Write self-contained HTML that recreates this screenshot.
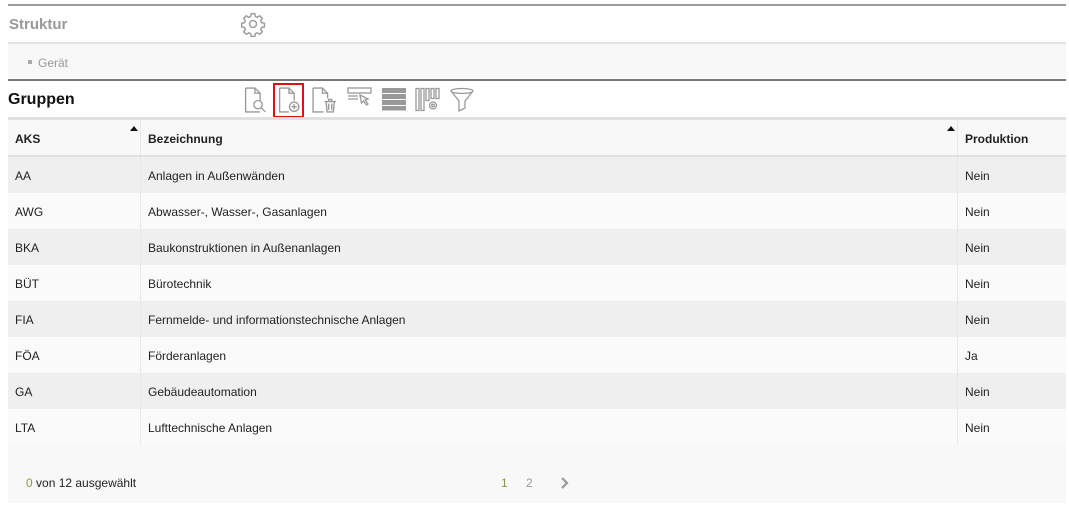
<!DOCTYPE html>
<html><head><meta charset="utf-8"><style>
body{margin:0;background:#fff;font-family:"Liberation Sans",Arial,sans-serif;width:1069px;height:509px;overflow:hidden;position:relative}
.abs{position:absolute}
.row{position:absolute;left:8px;width:1058px;height:36px;font-size:12px;color:#222}
.row div{position:absolute;top:0;height:36px;line-height:38px;box-sizing:border-box}
.c1{left:0;width:133px;padding-left:7px;border-right:1px solid #e8e8e8}
.c2{left:133px;width:817px;padding-left:7px;border-right:1px solid #e8e8e8}
.c3{left:950px;width:108px;padding-left:7px}
.g{background:#efefef}.w{background:#fafafa}
svg{position:absolute}
</style></head><body>
<div class="abs" style="left:8px;top:4px;width:1058px;height:2px;background:#9a9a9a"></div>
<div class="abs" style="left:9px;top:16px;font-size:15px;font-weight:bold;color:#999">Struktur</div>
<svg style="left:240px;top:11px" width="26" height="26" viewBox="0 0 24 24" fill="none" stroke="#999" stroke-width="1.3"><circle cx="12" cy="12" r="3.2"/><path d="M10.3 2.5h3.4l.5 2.6 1.8.8 2.2-1.5 2.4 2.4-1.5 2.2.8 1.8 2.6.5v3.4l-2.6.5-.8 1.8 1.5 2.2-2.4 2.4-2.2-1.5-1.8.8-.5 2.6h-3.4l-.5-2.6-1.8-.8-2.2 1.5-2.4-2.4 1.5-2.2-.8-1.8-2.6-.5v-3.4l2.6-.5.8-1.8-1.5-2.2 2.4-2.4 2.2 1.5 1.8-.8z"/></svg>
<div class="abs" style="left:8px;top:42px;width:1058px;height:2px;background:#e2e2e2"></div>
<div class="abs" style="left:8px;top:44px;width:1058px;height:34px;background:#f8f8f8"></div>
<div class="abs" style="left:28px;top:60px;width:4px;height:4px;background:#aaa"></div>
<div class="abs" style="left:38px;top:56px;font-size:12px;color:#999">Gerät</div>
<div class="abs" style="left:8px;top:79px;width:1058px;height:2px;background:#777"></div>
<div class="abs" style="left:8px;top:91px;font-size:16px;font-weight:bold;color:#111">Gruppen</div>
<svg style="left:243px;top:87px" width="26" height="27" viewBox="0 0 24 26" fill="none" stroke="#999" stroke-width="1.3"><path d="M2 1h9l5 5v7M16 24H2V1M11 1v5h5"/><circle cx="14" cy="17" r="4"/><path d="M17 20l4 4"/></svg>
<div class="abs" style="left:273px;top:83px;width:31px;height:35px;border:2px solid #e01010;box-sizing:border-box"></div>
<svg style="left:277px;top:87px" width="26" height="27" viewBox="0 0 24 26" fill="none" stroke="#999" stroke-width="1.3"><path d="M2 1h9l5 5v7M11 24H2V1M11 1v5h5"/><circle cx="16" cy="19" r="4.5"/><path d="M16 16.5v5M13.5 19h5"/></svg>
<svg style="left:311px;top:87px" width="27" height="27" viewBox="0 0 26 26" fill="none" stroke="#999" stroke-width="1.3"><path d="M2 1h9l5 5v5M12 24H2V1M11 1v5h5"/><path d="M13 14h11M17 14v-2h3v2M14.5 14l1 10h6l1-10M17 16v6M20 16v6"/></svg>
<svg style="left:347px;top:87px" width="26" height="22" viewBox="0 0 26 22" fill="none" stroke="#999" stroke-width="1.3"><rect x="1" y="1" width="23" height="5"/><path d="M1 9h10M1 12h10"/><path d="M13 8l8 4-3 1 3 4-1.5 1-3-4-2 2z"/></svg>
<svg style="left:381px;top:87px" width="26" height="24" viewBox="0 0 26 24"><rect x="1" y="1" width="24" height="5" fill="#999"/><rect x="1" y="7" width="24" height="5" fill="#999"/><rect x="1" y="13" width="24" height="5" fill="#999"/><rect x="1" y="19" width="24" height="4.5" fill="#999"/></svg>
<svg style="left:415px;top:87px" width="26" height="25" viewBox="0 0 26 24" fill="none" stroke="#999" stroke-width="1.3"><rect x="1" y="1" width="3" height="22"/><rect x="6" y="1" width="3" height="22"/><rect x="11" y="1" width="3" height="12"/><rect x="16" y="1" width="3" height="10"/><rect x="21" y="1" width="3" height="10"/><circle cx="18" cy="18" r="3.5"/><circle cx="18" cy="18" r="1.3"/></svg>
<svg style="left:449px;top:87px" width="26" height="27" viewBox="0 0 26 26" fill="none" stroke="#999" stroke-width="1.3"><ellipse cx="13" cy="3.5" rx="11" ry="2.5"/><path d="M2 3.5l8 10v10l6-3v-7l8-10"/></svg>
<div class="abs" style="left:8px;top:117px;width:1058px;height:3px;background:#e0e0e0"></div>
<div class="row" style="top:120px;height:35px;background:#f8f8f8;font-weight:bold">
<div class="c1" style="height:35px">AKS</div><div class="c2" style="height:35px">Bezeichnung</div><div class="c3" style="height:35px">Produktion</div></div>
<div class="abs" style="left:130px;top:126px;width:0;height:0;border-left:4px solid transparent;border-right:4px solid transparent;border-bottom:5px solid #111"></div>
<div class="abs" style="left:947px;top:126px;width:0;height:0;border-left:4px solid transparent;border-right:4px solid transparent;border-bottom:5px solid #111"></div>
<div class="abs" style="left:8px;top:155px;width:1058px;height:2px;background:#e0e0e0"></div>
<div class="row g" style="top:157px"><div class="c1">AA</div><div class="c2">Anlagen in Außenwänden</div><div class="c3">Nein</div></div>
<div class="row w" style="top:193px"><div class="c1">AWG</div><div class="c2">Abwasser-, Wasser-, Gasanlagen</div><div class="c3">Nein</div></div>
<div class="row g" style="top:229px"><div class="c1">BKA</div><div class="c2">Baukonstruktionen in Außenanlagen</div><div class="c3">Nein</div></div>
<div class="row w" style="top:265px"><div class="c1">BÜT</div><div class="c2">Bürotechnik</div><div class="c3">Nein</div></div>
<div class="row g" style="top:301px"><div class="c1">FIA</div><div class="c2">Fernmelde- und informationstechnische Anlagen</div><div class="c3">Nein</div></div>
<div class="row w" style="top:337px"><div class="c1">FÖA</div><div class="c2">Förderanlagen</div><div class="c3">Ja</div></div>
<div class="row g" style="top:373px"><div class="c1">GA</div><div class="c2">Gebäudeautomation</div><div class="c3">Nein</div></div>
<div class="row w" style="top:409px"><div class="c1">LTA</div><div class="c2">Lufttechnische Anlagen</div><div class="c3">Nein</div></div>
<div class="abs" style="left:8px;top:445px;width:1058px;height:58px;background:#f8f8f8"></div>
<div class="abs" style="left:26px;top:476px;font-size:12px;color:#222"><span style="color:#8a9a3a">0</span> von 12 ausgewählt</div>
<div class="abs" style="left:501px;top:476px;font-size:12px;color:#8a9a3a">1</div>
<div class="abs" style="left:526px;top:476px;font-size:12px;color:#999">2</div>
<svg style="left:560px;top:477px" width="10" height="12" viewBox="0 0 10 12"><path d="M2 1l5 5-5 5" fill="none" stroke="#999" stroke-width="2.2"/></svg>
</body></html>
